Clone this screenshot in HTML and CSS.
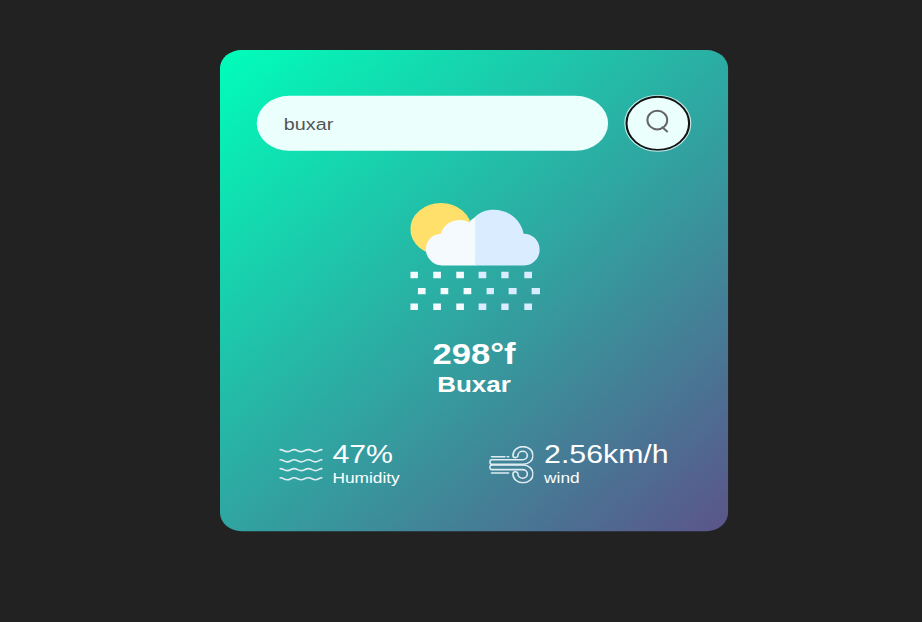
FILE: index.html
```html
<!DOCTYPE html>
<html lang="en">
<head>
<meta charset="utf-8">
<title>Weather</title>
<link rel="stylesheet" href="styles.css">
</head>
<body>
<main class="card">
  <div class="search">
    <input class="search-input" type="text" value="buxar" spellcheck="false" aria-label="City">
    <button class="search-button" aria-label="Search">
      <svg class="search-icon" viewBox="0 0 24 24" preserveAspectRatio="none"><ellipse cx="11.5" cy="11" rx="10" ry="9.8"/><path d="M16 18L22 23.5"/></svg>
    </button>
  </div>
  <section class="weather">
    <svg class="weather-icon" viewBox="30 25 390 321" preserveAspectRatio="none">
      <ellipse cx="122" cy="103" rx="92" ry="78" fill="#ffe06a"/>
      <path fill="#f5faff" d="M227 65V212H127C99 212 77 190 77 163C77 138 96 118 122 117C128 93 151 76 180 76Q194 76 207 83Q212 74 227 65Z"/>
      <path fill="#daecff" d="M225 66C240 52 257 45 280 45C326 45 362 76 370 117C398 117 418 138 418 164C418 191 397 212 370 212H225Z"/>
      <path fill="#f5faff" d="M30 231h23v19H30zM99 231h23v19H99zM168 231h23v19h-23zM53 279h23v19H53zM121 279h23v19h-23zM190 279h23v19h-23zM30 326h23v19H30zM99 326h23v19H99zM168 326h23v19h-23z"/>
      <path fill="#daecff" d="M235 231h23v19h-23zM303 231h22v19h-22zM372 231h23v19h-23zM259 279h22v19h-22zM325 279h24v19h-24zM394 279h25v19h-25zM235 326h23v19h-23zM303 326h22v19h-22zM372 326h23v19h-23z"/>
    </svg>
    <h1 class="temp">298°f</h1>
    <h2 class="city">Buxar</h2>
  </section>
  <section class="details">
    <div class="detail">
      <svg class="detail-icon" viewBox="27 47 130 111" preserveAspectRatio="none">
        <g class="waves">
          <path id="wave" d="M28 58C42 58 38 64 50 64S61 58 71 58S82 64 92 64S103 58 114 58S125 64 135 64S145 58 155 58"/>
          <use href="#wave" y="30"/><use href="#wave" y="56"/><use href="#wave" y="83"/>
        </g>
      </svg>
      <div>
        <p class="value">47%</p>
        <p class="label">Humidity</p>
      </div>
    </div>
    <div class="detail wind">
      <svg class="detail-icon" viewBox="26 46 134 114" preserveAspectRatio="none">
        <g class="gusts">
          <path d="M34 88H126A14 13 0 1 0 112 75A7 6 0 0 1 97 75A30 27 0 1 1 127 102H34A6 7 0 0 1 34 88Z"/>
          <path d="M34 118H126A14 13 0 1 1 112 131A7 6 0 0 0 97 131A30 27 0 1 0 127 104H34A6 7 0 0 0 34 118Z"/>
          <path d="M33 79H73M80 79H84M33 128H84"/>
        </g>
      </svg>
      <div>
        <p class="value">2.56km/h</p>
        <p class="label">wind</p>
      </div>
    </div>
  </section>
</main>
</body>
</html>
```
FILE: styles.css
```css
* {
  box-sizing: border-box;
  margin: 0;
  padding: 0;
  font-family: Arial, "Liberation Sans", sans-serif;
}

body {
  background: #222;
  overflow: hidden;
}

.card {
  width: 470px;
  height: 525px;
  margin: 50px 0 0 220px;
  padding: 50px 35px 0 34px;
  border-radius: 20px;
  background: linear-gradient(135deg, #00feba, #5b548a);
  color: #fff;
  transform: scale(1.081, 0.9165);
  transform-origin: 0 0;
}

.search {
  display: flex;
  gap: 16px;
}

.search-input {
  flex: 1;
  min-width: 0;
  height: 60px;
  padding: 12px 25px 10px;
  border: 0;
  outline: 0;
  border-radius: 30px;
  background: #ebfffc;
  color: #555;
  font-size: 18.3px;
}

.search-button {
  width: 60px;
  height: 60px;
  border: 2px solid #151515;
  border-radius: 50%;
  outline: 1px solid rgba(255, 255, 255, 0.75);
  background: #ebfffc;
}

.search-icon {
  display: block;
  width: 22px;
  height: 25px;
  margin: -5px auto 0;
  fill: none;
  stroke: #666;
  stroke-width: 2;
  overflow: visible;
}

.weather {
  display: flex;
  flex-direction: column;
  align-items: center;
  padding: 57.4px 0 0 1px;
}

.weather-icon {
  width: 120.3px;
  height: 117px;
  margin-left: 2px;
}

.temp {
  margin-top: 30px;
  font-size: 32px;
  line-height: 36px;
}

.city {
  font-size: 24px;
  line-height: 29px;
}

.details {
  display: flex;
  justify-content: space-between;
  margin-top: 46.5px;
  padding: 0 20px 0 20.5px;
}

.detail {
  display: flex;
  align-items: center;
  gap: 9.5px;
}

.detail-icon {
  width: 40px;
  height: 41px;
  margin-top: 4px;
}

.wind .detail-icon {
  width: 41.5px;
}

.waves,
.gusts {
  fill: none;
  stroke: #dfedf2;
  stroke-width: 4.8;
  stroke-linecap: round;
}

.value {
  font-size: 28px;
  line-height: 32px;
}

.label {
  font-size: 16px;
  line-height: 17px;
}
```
